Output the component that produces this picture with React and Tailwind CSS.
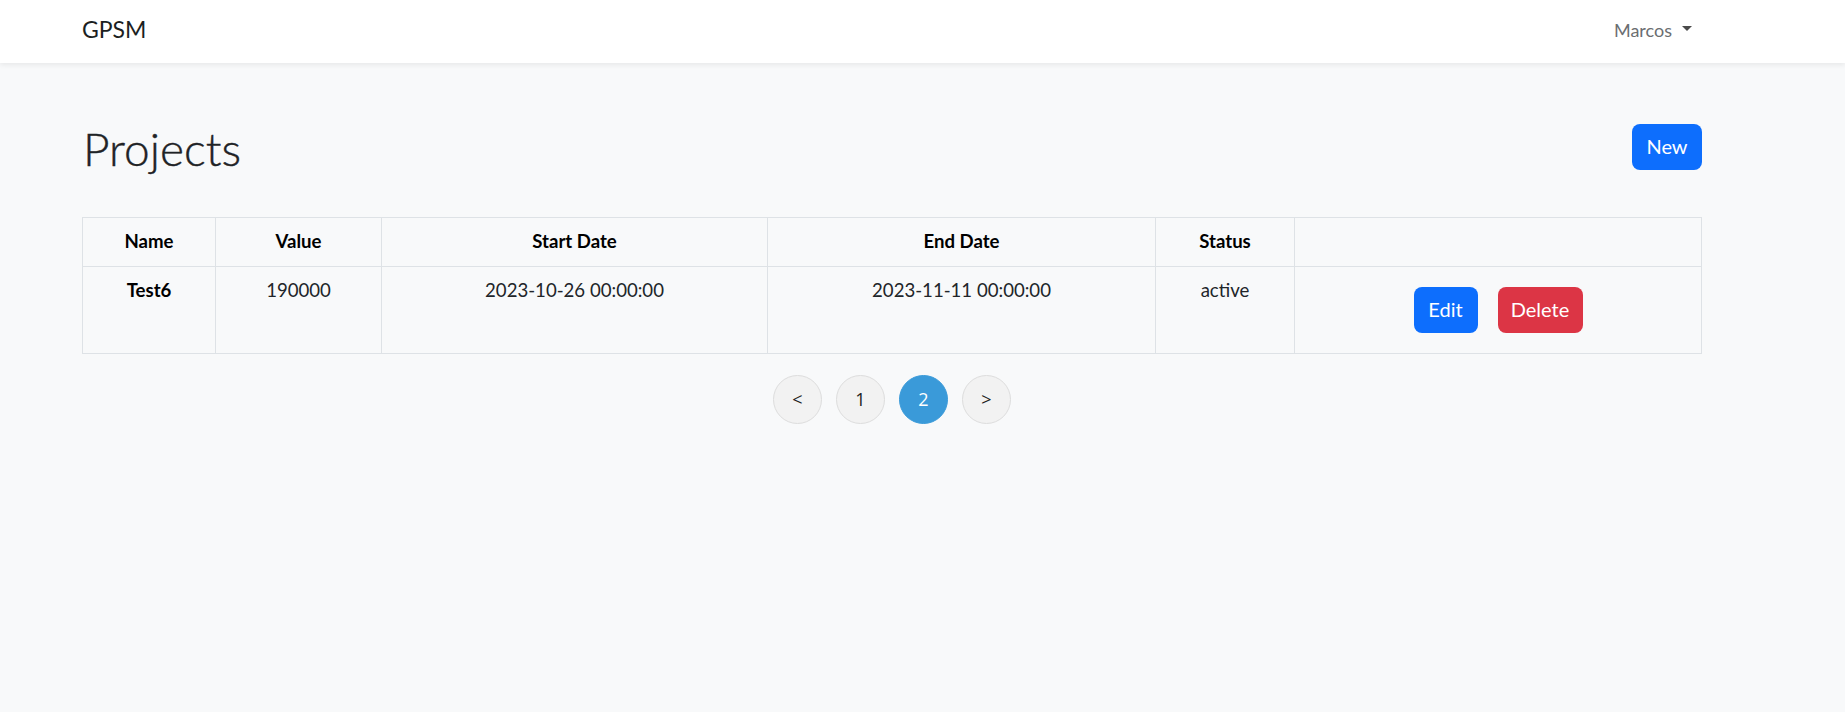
import React from "react";

const cols = ["w-[133px]", "w-[166px]", "w-[386px]", "w-[388px]", "w-[139px]", "w-[407px]"];

export default function App() {
  return (
    <div className="min-h-screen bg-[#f8f9fa] text-[#212529]" style={{ fontFamily: "Lato, 'Noto Sans', sans-serif" }}>
      <nav className="h-[63px] bg-white shadow-[0_2px_5px_rgba(0,0,0,0.07)]">
        <div className="ml-[82px] w-[1620px] h-full flex items-center justify-between pb-[4px]">
          <span className="text-[23px] text-[#1c1f22] leading-none">GPSM</span>
          <button className="flex items-center text-[18px] text-[#6b6e71] mr-[10px] leading-none">
            Marcos
            <span className="ml-[10px] mb-[2px] w-0 h-0 border-x-[5px] border-t-[5px] border-x-transparent border-t-[#4a4a4a]"></span>
          </button>
        </div>
      </nav>

      <main className="ml-[82px] w-[1620px]">
        <div className="mt-[61px] h-[46px] flex items-center justify-between">
          <h1 className="text-[46px] font-light leading-[46px] pt-[3px] pl-[1px] text-[#1f2326]" style={{ WebkitTextStroke: "0.4px #1f2326" }}>Projects</h1>
          <button className="w-[70px] h-[46px] rounded-[8px] bg-[#0d6efd] text-white text-[20px] leading-none pb-[3px]">New</button>
        </div>

        <table className="mt-[47px] w-[1620px] table-fixed border-collapse text-[18.6px]">
          <colgroup>
            {cols.map((c, i) => (
              <col key={i} className={c} />
            ))}
          </colgroup>
          <thead>
            <tr className="h-[49px]">
              {["Name", "Value", "Start Date", "End Date", "Status", ""].map((h, i) => (
                <th key={i} className="border border-[#dee2e6] text-center font-bold text-black align-middle">
                  {h}
                </th>
              ))}
            </tr>
          </thead>
          <tbody>
            <tr className="h-[87px]">
              <th className="border border-[#dee2e6] text-center font-bold text-black align-top pt-[10px]">Test6</th>
              <td className="border border-[#dee2e6] text-center align-top pt-[10px]">190000</td>
              <td className="border border-[#dee2e6] text-center align-top pt-[10px]">2023-10-26 00:00:00</td>
              <td className="border border-[#dee2e6] text-center align-top pt-[10px]">2023-11-11 00:00:00</td>
              <td className="border border-[#dee2e6] text-center align-top pt-[10px]">active</td>
              <td className="border border-[#dee2e6] align-middle">
                <div className="flex justify-center gap-[20px]">
                  <button className="w-[64px] h-[46px] rounded-[8px] bg-[#0d6efd] text-white text-[20px] leading-none pb-[3px]">Edit</button>
                  <button className="w-[85px] h-[46px] rounded-[8px] bg-[#dc3545] text-white text-[20px] leading-none pb-[3px]">Delete</button>
                </div>
              </td>
            </tr>
          </tbody>
        </table>

        <div className="mt-[21px] flex justify-center gap-[14px]" style={{ fontFamily: "'Open Sans', sans-serif" }}>
          {["<", "1", "2", ">"].map((p) => (
            <button
              key={p}
              className={
                p === "2"
                  ? "w-[49px] h-[49px] rounded-full bg-[#3a9ad9] border border-[#3a9ad9] text-white text-[18px] flex items-center justify-center"
                  : "w-[49px] h-[49px] rounded-full bg-[#f2f2f2] border border-[#dddddd] text-[#222] text-[18px] flex items-center justify-center"
              }
            >
              {p}
            </button>
          ))}
        </div>
      </main>
    </div>
  );
}
